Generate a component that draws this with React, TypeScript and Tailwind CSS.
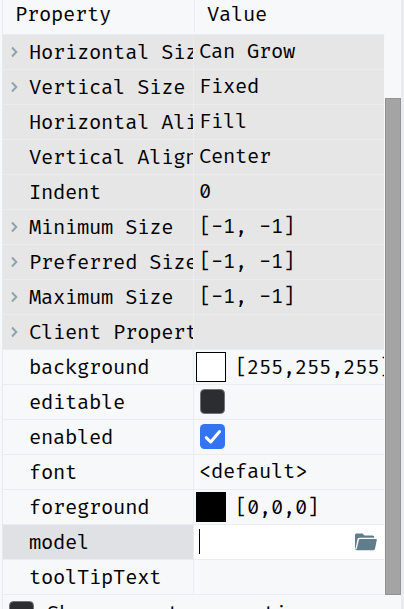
import React from 'react';

type Row = {
  name: string;
  value?: string;
  expandable?: boolean;
  layout?: boolean;
  swatch?: 'white' | 'black';
  check?: boolean;
  editing?: boolean;
};

const rows: Row[] = [
  { name: 'Horizontal Size Policy', value: 'Can Grow', expandable: true, layout: true },
  { name: 'Vertical Size Policy', value: 'Fixed', expandable: true, layout: true },
  { name: 'Horizontal Align', value: 'Fill', layout: true },
  { name: 'Vertical Align', value: 'Center', layout: true },
  { name: 'Indent', value: '0', layout: true },
  { name: 'Minimum Size', value: '[-1, -1]', expandable: true, layout: true },
  { name: 'Preferred Size', value: '[-1, -1]', expandable: true, layout: true },
  { name: 'Maximum Size', value: '[-1, -1]', expandable: true, layout: true },
  { name: 'Client Properties', expandable: true, layout: true },
  { name: 'background', value: '[255,255,255]', swatch: 'white' },
  { name: 'editable', check: false },
  { name: 'enabled', check: true },
  { name: 'font', value: '<default>' },
  { name: 'foreground', value: '[0,0,0]', swatch: 'black' },
  { name: 'model', editing: true },
  { name: 'toolTipText' },
];

function Chevron() {
  return (
    <svg className="block h-3 w-2" viewBox="0 0 8 12" fill="none" stroke="#8fa3ad" strokeWidth="2">
      <path d="M1 1.5 5.3 6 1 10.5" />
    </svg>
  );
}

function Checkbox({ checked }: { checked: boolean }) {
  return checked ? (
    <svg className="block size-[25px] shrink-0" viewBox="0 0 25 25">
      <rect width="25" height="25" rx="4.5" fill="#3574f0" />
      <path d="M6.2 13.6 10.7 18 19.6 7.6" fill="none" stroke="#fff" strokeWidth="3" strokeLinecap="round" strokeLinejoin="round" />
    </svg>
  ) : (
    <div className="size-[25px] shrink-0 rounded-[4.5px] border-[1.5px] border-[#6f737a] bg-[#2b2d30]" />
  );
}

function Folder() {
  return (
    <svg className="block h-[18px] w-[22px]" viewBox="0 0 22 18" fill="#607d8b">
      <path d="M0 15V2Q0 .5 1.5 .5H7.5L9.5 2.5H17.5Q19.3 2.5 19.3 4.2V4.7H4.2Q2.8 4.7 2.5 6L.6 15.5Z" />
      <path d="M5.2 6.1H21.2Q22 6.1 21.8 7L20 15.8Q19.7 17.2 18.4 17.2H1.9Q.5 17.2 .2 15.8H1.8L3.8 7Q4 6.1 5.2 6.1Z" />
    </svg>
  );
}

function Value({ row }: { row: Row }) {
  if (row.editing) {
    return (
      <div className="flex h-full items-center justify-between bg-white pr-[7px] pb-px pl-[5px]">
        <div className="h-[25px] w-px bg-black" />
        <Folder />
      </div>
    );
  }
  if (row.check !== undefined) {
    return (
      <div className="flex h-full items-start pt-[4px] pl-[6px]">
        <Checkbox checked={row.check} />
      </div>
    );
  }
  return (
    <div className="flex h-full items-center overflow-hidden">
      {row.swatch && (
        <div className={`ml-[2px] size-[30px] shrink-0 border border-black ${row.swatch === 'white' ? 'bg-white' : 'bg-black'}`} />
      )}
      <span className={`whitespace-pre leading-8 ${row.swatch ? 'pt-[2px] pl-[9px]' : 'pl-[5px]'}`}>{row.value}</span>
    </div>
  );
}

export default function App() {
  return (
    <div className="flex h-[609px] w-[404px] overflow-hidden bg-[#f7f8fa] font-['Fira_Code','DejaVu_Sans_Mono',monospace] text-[20px] tracking-[-0.29px] text-black">
      <div className="w-[3px] shrink-0 border-r border-[#e8e9ed]" />
      <div className="flex w-[398px] shrink-0 flex-col">
        <div className="flex h-[34px] shrink-0 leading-[30px]">
          <div className="h-8 w-[192px] border-r border-[#ebecf0] pl-[12px]">Property</div>
          <div className="pl-[12px]">Value</div>
        </div>
        <div className="flex h-[561px] shrink-0">
          <div className="w-[382px] border-t border-[#ebecf0]">
            {rows.map((row) => (
              <div key={row.name} className={`flex h-[35px] w-[381px] border-b border-[#ebecf0] ${row.layout ? 'bg-[#e6e6e6]' : ''}`}>
                <div className={`flex w-[191px] shrink-0 items-center overflow-hidden border-r border-[#ebecf0] ${row.editing ? 'bg-[#dfe1e5]' : ''}`}>
                  <div className="w-[26px] shrink-0 pl-[8px]">{row.expandable && <Chevron />}</div>
                  <span className="whitespace-pre pt-[2px] leading-8">{row.name}</span>
                </div>
                <div className="h-[34px] min-w-0 flex-1">
                  <Value row={row} />
                </div>
              </div>
            ))}
          </div>
          <div className="mt-[64px] w-4 border border-[#929292] bg-[#a4a4a4]" />
        </div>
        <div className="flex h-[14px] items-start overflow-hidden pt-[6px] pl-[6px]">
          <Checkbox checked={false} />
          <span className="whitespace-pre pt-px pl-[13px] leading-6">Show expert properties</span>
        </div>
      </div>
      <div className="w-[3px] shrink-0 bg-[#ebecf0]" />
    </div>
  );
}
